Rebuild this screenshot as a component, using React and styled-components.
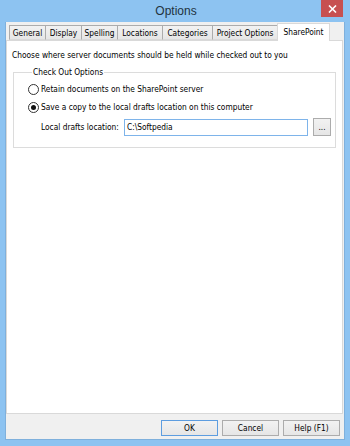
import React from 'react';
import styled, { createGlobalStyle } from 'styled-components';

const GlobalStyle = createGlobalStyle`
  html, body {
    margin: 0;
    padding: 0;
    background: #ffffff;
  }

  body {
    font-family: "DejaVu Sans Condensed", "Liberation Sans", sans-serif;
    font-size: 8.3px;
    color: #000000;
  }
`;

const Window = styled.div`
  width: 350px;
  height: 446px;
  box-sizing: border-box;
  display: flex;
  flex-direction: column;
  background: #8dc3f1;
  padding: 0 5px 6px 5px;
`;

const TitleBar = styled.div`
  height: 22px;
  display: grid;
  grid-template-columns: 1fr auto 1fr;
  align-items: start;
`;

const Title = styled.div`
  grid-column: 2;
  font-family: "Liberation Sans", sans-serif;
  font-size: 12px;
  line-height: 22px;
  color: #23323f;
  padding-left: 2px;
`;

const CloseButton = styled.div`
  grid-column: 3;
  justify-self: end;
  width: 22px;
  height: 17px;
  margin-right: 2px;
  background: #c75050;
  display: flex;
  align-items: center;
  justify-content: center;
`;

const Client = styled.div`
  flex: 1;
  display: flex;
  flex-direction: column;
  background: #f0f0f0;
  border-left: 1px solid #7fb0dc;
  border-right: 1px solid #7fb0dc;
  border-bottom: 1px solid #7fb0dc;
`;

const TabStrip = styled.div`
  display: flex;
  align-items: flex-end;
  height: 17px;
  padding-left: 3px;
  margin-top: 1px;
  margin-right: 1px;
`;

const Tab = styled.div`
  box-sizing: border-box;
  width: ${(p) => p.$w}px;
  height: ${(p) => (p.$active ? 18 : 15)}px;
  margin-bottom: ${(p) => (p.$active ? -1 : 0)}px;
  border: 1px solid ${(p) => (p.$active ? '#d9d9d9' : '#acacac')};
  border-bottom: ${(p) => (p.$active ? 'none' : '1px solid #d9d9d9')};
  margin-left: ${(p) => (p.$first ? 0 : -1)}px;
  background: ${(p) => (p.$active ? '#ffffff' : 'linear-gradient(#f2f2f2, #e6e6e6)')};
  display: flex;
  align-items: ${(p) => (p.$active ? 'flex-start' : 'center')};
  padding-top: ${(p) => (p.$active ? 2 : 0)}px;
  justify-content: center;
  white-space: nowrap;
  line-height: 12px;
  position: relative;
  z-index: ${(p) => (p.$active ? 1 : 0)};
`;

const Panel = styled.div`
  height: 374px;
  box-sizing: border-box;
  margin-right: 1px;
  background: #ffffff;
  border: 1px solid #d9d9d9;
  padding: 8px 5px 0 5px;
`;

const Description = styled.div`
  line-height: 12px;
`;

const GroupBox = styled.fieldset`
  margin: 5px 0 0 1px;
  width: 323px;
  box-sizing: border-box;
  border: 1px solid #dcdcdc;
  border-radius: 0;
  padding: 2px 0 11px 14px;
  display: flex;
  flex-direction: column;
`;

const Legend = styled.legend`
  padding: 0 1px;
  margin-left: 4px;
  line-height: 12px;
`;

const RadioRow = styled.label`
  display: flex;
  align-items: center;
  gap: 2px;
  height: 18px;
  line-height: 12px;
`;

const Radio = styled.span`
  box-sizing: border-box;
  width: 11px;
  height: 11px;
  border-radius: 50%;
  border: 1px solid #333333;
  background: #ffffff;
  display: inline-flex;
  align-items: center;
  justify-content: center;

  &::after {
    content: '';
    width: 5px;
    height: 5px;
    border-radius: 50%;
    background: ${(p) => (p.$checked ? '#111111' : 'transparent')};
  }
`;

const FieldRow = styled.div`
  display: flex;
  align-items: center;
  margin-top: 2px;
  padding-left: 13px;
  height: 18px;
`;

const FieldLabel = styled.span`
  width: 83px;
  white-space: nowrap;
`;

const TextBox = styled.div`
  box-sizing: border-box;
  width: 184px;
  height: 17px;
  border: 1px solid #7eb4ea;
  background: #ffffff;
  padding-left: 2px;
  display: flex;
  align-items: center;
`;

const BrowseButton = styled.div`
  box-sizing: border-box;
  width: 18px;
  height: 18px;
  margin-left: 5px;
  border: 1px solid #acacac;
  background: linear-gradient(#f2f2f2, #e6e6e6);
  display: flex;
  align-items: center;
  justify-content: center;
  line-height: 12px;
`;

const ButtonBar = styled.div`
  flex: 1;
  display: flex;
  justify-content: flex-end;
  align-items: flex-start;
  gap: 4px;
  padding: 6px 4px 0 0;
`;

const Button = styled.div`
  box-sizing: border-box;
  width: 57px;
  height: 16px;
  border: 1px solid ${(p) => (p.$default ? '#5d9de0' : '#acacac')};
  background: linear-gradient(#f2f2f2, #e6e6e6);
  display: flex;
  align-items: center;
  justify-content: center;
  line-height: 12px;
`;

const tabs = [
  { label: 'General', w: 37 },
  { label: 'Display', w: 37 },
  { label: 'Spelling', w: 37 },
  { label: 'Locations', w: 46 },
  { label: 'Categories', w: 51 },
  { label: 'Project Options', w: 66 },
  { label: 'SharePoint', w: 53, active: true },
];

export default function App() {
  return (
    <>
      <GlobalStyle />
      <Window>
        <TitleBar>
          <Title>Options</Title>
          <CloseButton>
            <svg width="9" height="8" viewBox="0 0 9 8">
              <path d="M1 0.5 L8 7.5 M8 0.5 L1 7.5" stroke="#ffffff" strokeWidth="1.6" />
            </svg>
          </CloseButton>
        </TitleBar>
        <Client>
          <TabStrip>
            {tabs.map((t, i) => (
              <Tab key={t.label} $w={t.w} $active={t.active} $first={i === 0}>
                {t.label}
              </Tab>
            ))}
          </TabStrip>
          <Panel>
            <Description>Choose where server documents should be held while checked out to you</Description>
            <GroupBox>
              <Legend>Check Out Options</Legend>
              <RadioRow>
                <Radio />
                Retain documents on the SharePoint server
              </RadioRow>
              <RadioRow>
                <Radio $checked />
                Save a copy to the local drafts location on this computer
              </RadioRow>
              <FieldRow>
                <FieldLabel>Local drafts location:</FieldLabel>
                <TextBox>C:\Softpedia</TextBox>
                <BrowseButton>...</BrowseButton>
              </FieldRow>
            </GroupBox>
          </Panel>
          <ButtonBar>
            <Button $default>OK</Button>
            <Button>Cancel</Button>
            <Button>Help (F1)</Button>
          </ButtonBar>
        </Client>
      </Window>
    </>
  );
}
